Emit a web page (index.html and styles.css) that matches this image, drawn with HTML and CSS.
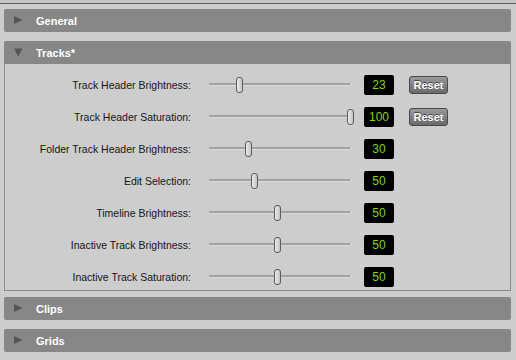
FILE: index.html
```html
<!DOCTYPE html>
<html lang="en">
    <head>
        <meta charset="UTF-8">
        <title>Preferences - Display</title>
        <link rel="stylesheet" href="styles.css">
    </head>
    <body>
        <div class="top-bar"></div>

        <div class="secciones">
            <div class="seccion">
                <div class="cabecera">
                    <svg class="flecha" width="9" height="9" viewBox="0 0 9 9"><polygon points="0,0 8.5,4 0,8" /></svg>
                    <span>General</span>
                </div>
            </div>

            <div class="seccion abierta">
                <div class="cabecera">
                    <svg class="flecha" width="9" height="9" viewBox="0 0 9 9"><polygon points="0,0.5 8.5,0.5 4.25,8.5" /></svg>
                    <span>Tracks*</span>
                </div>
                <div class="cuerpo">
                    <div class="fila">
                        <div class="etiqueta">Track Header Brightness:</div>
                        <div class="slider"><div class="pista"></div><div class="pomo" style="left: 27px"></div></div>
                        <div class="valor">23</div>
                        <button class="reset">Reset</button>
                    </div>
                    <div class="fila">
                        <div class="etiqueta">Track Header Saturation:</div>
                        <div class="slider"><div class="pista"></div><div class="pomo" style="left: 138px"></div></div>
                        <div class="valor">100</div>
                        <button class="reset">Reset</button>
                    </div>
                    <div class="fila">
                        <div class="etiqueta">Folder Track Header Brightness:</div>
                        <div class="slider"><div class="pista"></div><div class="pomo" style="left: 36px"></div></div>
                        <div class="valor">30</div>
                    </div>
                    <div class="fila">
                        <div class="etiqueta">Edit Selection:</div>
                        <div class="slider"><div class="pista"></div><div class="pomo" style="left: 42px"></div></div>
                        <div class="valor">50</div>
                    </div>
                    <div class="fila">
                        <div class="etiqueta">Timeline Brightness:</div>
                        <div class="slider"><div class="pista"></div><div class="pomo" style="left: 65px"></div></div>
                        <div class="valor">50</div>
                    </div>
                    <div class="fila">
                        <div class="etiqueta">Inactive Track Brightness:</div>
                        <div class="slider"><div class="pista"></div><div class="pomo" style="left: 65px"></div></div>
                        <div class="valor">50</div>
                    </div>
                    <div class="fila">
                        <div class="etiqueta">Inactive Track Saturation:</div>
                        <div class="slider"><div class="pista"></div><div class="pomo" style="left: 65px"></div></div>
                        <div class="valor">50</div>
                    </div>
                </div>
            </div>

            <div class="seccion">
                <div class="cabecera">
                    <svg class="flecha" width="9" height="9" viewBox="0 0 9 9"><polygon points="0,0 8.5,4 0,8" /></svg>
                    <span>Clips</span>
                </div>
            </div>

            <div class="seccion">
                <div class="cabecera">
                    <svg class="flecha" width="9" height="9" viewBox="0 0 9 9"><polygon points="0,0 8.5,4 0,8" /></svg>
                    <span>Grids</span>
                </div>
            </div>
        </div>
    </body>
</html>
```

FILE: styles.css
```css
* {
    box-sizing: border-box;
    font-family: "Liberation Sans", Arial, sans-serif;
}

body {
    margin: 0;
    width: 516px;
    height: 360px;
    overflow: hidden;
    background: #cdcdcd;
    color: #111;
}

.top-bar {
    height: 4px;
    border-bottom: 1px solid #5e5e5e;
    background: #c6c6c6;
}

.secciones {
    display: flex;
    flex-direction: column;
    gap: 9px;
    padding: 5px 5px 0 4px;
}

.seccion.abierta + .seccion {
    margin-top: -3px; /* hueco mas corto tras el cuerpo abierto */
}

.cabecera {
    display: flex;
    align-items: center;
    height: 23px;
    background: #878787;
    border-radius: 2px;
    color: #fff;
    font-size: 11px;
    font-weight: bold;
}

.abierta .cabecera {
    border-radius: 2px 2px 0 0;
}

.flecha {
    margin-left: 10px;
    margin-right: 13px;
    fill: #555;
}

.cuerpo {
    display: flex;
    flex-direction: column;
    gap: 12px;
    padding: 11px 0 3px;
    border: 1px solid #8c8c8c;
    border-top: none;
}

.fila {
    display: grid;
    grid-template-columns: 186px 141px 30px 39px;
    column-gap: 18px;
    align-items: center;
    height: 20px;
}

.etiqueta {
    text-align: right;
    font-size: 10.5px;
    color: #151515;
}

.slider {
    position: relative;
    height: 20px;
}

.pista {
    position: absolute;
    left: 0;
    right: 0;
    top: 8px;
    height: 3px;
    border-top: 2px solid #a2a2a2;
    border-bottom: 1px solid #dcdcdc;
}

.pomo {
    position: absolute;
    top: 2px;
    width: 7px;
    height: 16px;
    border: 1px solid #5c5c5c;
    border-radius: 3px;
    background: linear-gradient(to right, #eaeaea, #c4c4c4);
}

.valor {
    margin-left: -4px;
    height: 20px;
    width: 30px;
    background: #000;
    border-radius: 2px;
    color: #86d11a;
    font-size: 12px;
    line-height: 20px;
    text-align: center;
}

.reset {
    margin-left: -7px;
    width: 39px;
    height: 18px;
    padding: 0;
    border: 1px solid #4a4a4a;
    border-radius: 3px;
    background: linear-gradient(#9a9a9a, #6a6a6a);
    color: #fff;
    font-size: 11px;
    font-weight: bold;
    text-shadow: 0 -1px 0 #444;
}
```
